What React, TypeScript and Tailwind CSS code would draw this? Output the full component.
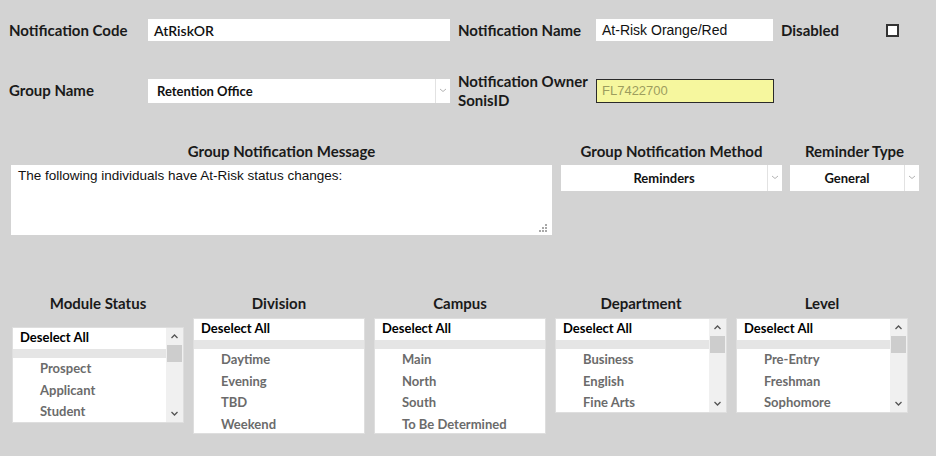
import React from 'react'

const label = "font-['Lato',sans-serif] font-bold text-[15px] text-[#1a1a1a]"

function Chevron() {
  return (
    <svg width="8" height="5" viewBox="0 0 8 5" className="block">
      <path d="M1 1l3 2.5L7 1" fill="none" stroke="#b4b4b4" strokeWidth="1" />
    </svg>
  )
}

function Select({ value, w, h, center }: { value: string; w: string; h: string; center?: boolean }) {
  return (
    <div className={`flex bg-white ${w} ${h}`}>
      <div className={`flex-1 flex items-center font-['Lato',sans-serif] font-bold text-[13px] text-[#111] pt-[2px] ${center ? 'justify-center' : 'pl-[9px]'}`}>
        {value}
      </div>
      <div className="w-[15px] border-l border-[#e2e2e2] flex items-center justify-center">
        <Chevron />
      </div>
    </div>
  )
}

function ScrollBar() {
  return (
    <div className="w-[17px] bg-[#f0f0f0] flex flex-col items-center">
      <svg width="9" height="17" viewBox="0 0 9 17" className="block shrink-0">
        <path d="M1.5 10l3-3 3 3" fill="none" stroke="#555" strokeWidth="1.3" />
      </svg>
      <div className="w-[15px] h-[17px] shrink-0 bg-[#cdcdcd]" />
      <div className="flex-1" />
      <svg width="9" height="17" viewBox="0 0 9 17" className="block shrink-0">
        <path d="M1.5 7l3 3 3-3" fill="none" stroke="#555" strokeWidth="1.3" />
      </svg>
    </div>
  )
}

function ListBox({ title, items, scroll, h, offset }: { title: string; items: string[]; scroll?: boolean; h: string; offset?: string }) {
  return (
    <div className="w-[172px] flex flex-col items-center">
      <div className={`${label} h-[18px] leading-[18px]`}>{title}</div>
      <div className={`w-full ${offset ?? 'mt-[6px]'} ${h} bg-white border border-[#dedede] flex overflow-hidden`}>
        <div className="flex-1 flex flex-col">
          <div className="h-[20px] shrink-0 pl-[7px] flex items-center font-['Lato',sans-serif] font-bold text-[13px] text-black">Deselect All</div>
          <div className="h-[9px] shrink-0 mt-[1px] bg-[#e5e5e5]" />
          <div className="pt-[1px] shrink-0">
            {items.map(it => (
              <div key={it} className="h-[21.4px] pl-[27px] flex items-center font-['Lato',sans-serif] font-bold text-[13px] text-[#6b6b6b]">{it}</div>
            ))}
          </div>
        </div>
        {scroll && <ScrollBar />}
      </div>
    </div>
  )
}

export default function App() {
  return (
    <div className="w-[936px] h-[456px] bg-[#d3d3d3] overflow-hidden">
      {/* row 1 */}
      <div className="flex items-center pt-[19px]">
        <div className={`${label} w-[148px] pl-[9px]`}>Notification Code</div>
        <div className="w-[302px] h-[22px] bg-white flex items-center pl-[6px] font-['Lato',sans-serif] font-semibold text-[14px] text-[#111]">AtRiskOR</div>
        <div className={`${label} w-[146px] pl-[8px]`}>Notification Name</div>
        <div className="w-[177px] h-[22px] bg-white flex items-center pl-[6px] font-['Liberation_Sans',Arial,sans-serif] text-[14px] text-[#111]">At-Risk Orange/Red</div>
        <div className={`${label} w-[113px] pl-[8px]`}>Disabled</div>
        <div className="w-[13px] h-[13px] border-2 border-[#333] bg-white" />
      </div>

      {/* row 2 */}
      <div className="flex items-center mt-[30px]">
        <div className={`${label} w-[148px] pl-[9px]`}>Group Name</div>
        <Select value="Retention Office" w="w-[302px]" h="h-[24px]" />
        <div className={`${label} w-[146px] pl-[8px] leading-[19px]`}>Notification Owner<br />SonisID</div>
        <div className="w-[178px] h-[24px] bg-[#f6f79e] border border-[#2a2a2a] flex items-center pl-[5px] font-['Liberation_Sans',Arial,sans-serif] text-[13px] text-[#9d9d5e]">FL7422700</div>
      </div>

      {/* row 3 */}
      <div className="flex mt-[32px] pl-[11px]">
        <div className="w-[541px] flex flex-col items-center">
          <div className={`${label} h-[18px] leading-[18px]`}>Group Notification Message</div>
          <div className="relative w-full h-[70px] mt-[5px] bg-white px-[7px] py-[1px]">
            <div className="font-['Liberation_Sans',Arial,sans-serif] text-[13.5px] text-[#111] leading-[19px]">The following individuals have At-Risk status changes:</div>
            <svg width="8" height="8" viewBox="0 0 8 8" className="absolute right-[5px] bottom-[3px]">
              <rect x="6" y="0" width="2" height="2" fill="#a8a8a8" />
              <rect x="3" y="3" width="2" height="2" fill="#a8a8a8" />
              <rect x="6" y="3" width="2" height="2" fill="#a8a8a8" />
              <rect x="0" y="6" width="2" height="2" fill="#a8a8a8" />
              <rect x="3" y="6" width="2" height="2" fill="#a8a8a8" />
              <rect x="6" y="6" width="2" height="2" fill="#a8a8a8" />
            </svg>
          </div>
        </div>
        <div className="ml-[9px] w-[221px] flex flex-col items-center">
          <div className={`${label} h-[18px] leading-[18px]`}>Group Notification Method</div>
          <div className="mt-[5px]"><Select value="Reminders" w="w-[221px]" h="h-[26px]" center /></div>
        </div>
        <div className="ml-[8px] w-[129px] flex flex-col items-center">
          <div className={`${label} h-[18px] leading-[18px]`}>Reminder Type</div>
          <div className="mt-[5px]"><Select value="General" w="w-[129px]" h="h-[26px]" center /></div>
        </div>
      </div>

      {/* row 4 */}
      <div className="flex items-start gap-[9px] mt-[59px] pl-[12px]">
        <ListBox title="Module Status" items={['Prospect', 'Applicant', 'Student']} scroll h="h-[96px]" offset="mt-[15px]" />
        <ListBox title="Division" items={['Daytime', 'Evening', 'TBD', 'Weekend']} h="h-[116px]" />
        <ListBox title="Campus" items={['Main', 'North', 'South', 'To Be Determined']} h="h-[116px]" />
        <ListBox title="Department" items={['Business', 'English', 'Fine Arts']} scroll h="h-[95px]" />
        <ListBox title="Level" items={['Pre-Entry', 'Freshman', 'Sophomore']} scroll h="h-[95px]" />
      </div>
    </div>
  )
}
